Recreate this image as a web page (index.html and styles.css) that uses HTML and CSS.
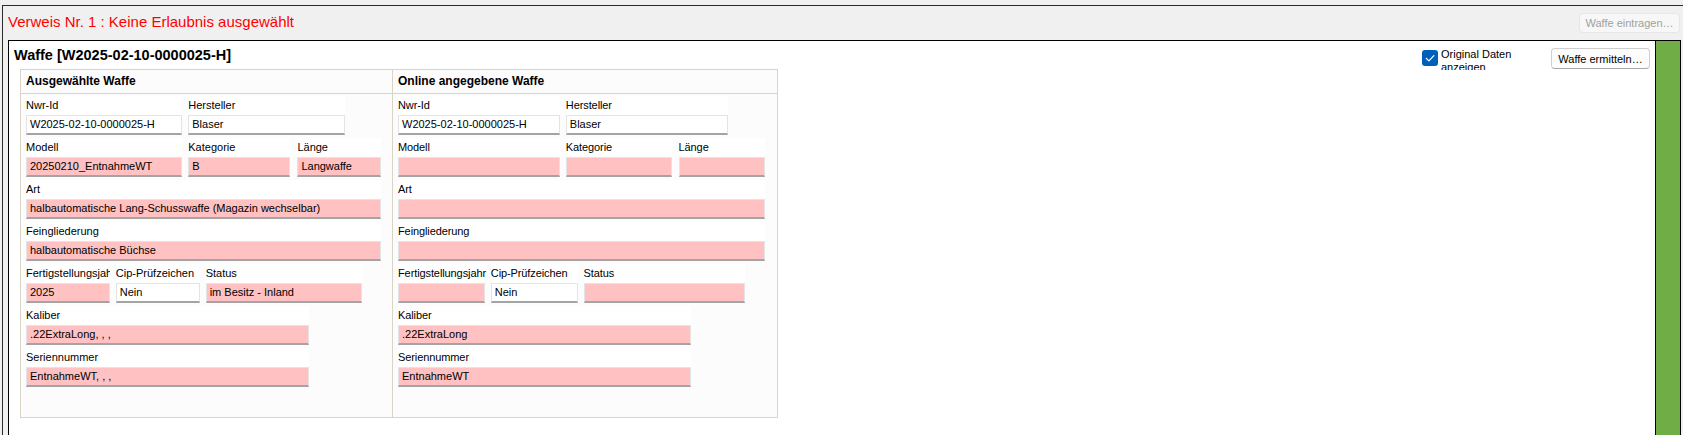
FILE: index.html
```html
<!DOCTYPE html>
<html lang="de">

<head>
    <meta charset="UTF-8">
    <title>Verweis</title>
    <link rel="stylesheet" href="styles.css">
</head>

<body>

    <div class="outer">
        <div class="outer-head">
            <div class="verweis">Verweis Nr. 1 : Keine Erlaubnis ausgewählt</div>
            <button class="btn btn-off" disabled>Waffe eintragen…</button>
        </div>

        <div class="panel">
            <div class="panel-main">
                <div class="panel-head">
                    <div class="panel-title">Waffe [W2025-02-10-0000025-H]</div>
                    <div class="tools">
                        <div class="chk">
                            <span class="chk-box">
                                <svg width="16" height="16" viewBox="0 0 16 16">
                                    <path d="M4.2 8.3 L6.9 10.9 L11.9 5.6" fill="none" stroke="#fff" stroke-width="1.2" stroke-linecap="round" stroke-linejoin="round"/>
                                </svg>
                            </span>
                            <span class="chk-text">Original Daten anzeigen</span>
                        </div>
                        <button class="btn btn-find">Waffe ermitteln…</button>
                    </div>
                </div>

                <div class="cmp">
                    <!-- links: ausgewaehlte waffe -->
                    <div class="col col-left">
                        <div class="col-head">Ausgewählte Waffe</div>
                        <div class="col-body">
                            <div class="row">
                                <div class="fld w43"><div class="lbl">Nwr-Id</div><div class="inp">W2025-02-10-0000025-H</div></div>
                                <div class="fld w43"><div class="lbl">Hersteller</div><div class="inp">Blaser</div></div>
                            </div>
                            <div class="row">
                                <div class="fld w43"><div class="lbl">Modell</div><div class="inp bad">20250210_EntnahmeWT</div></div>
                                <div class="fld w28"><div class="lbl">Kategorie</div><div class="inp bad">B</div></div>
                                <div class="fld w23 gap1"><div class="lbl">Länge</div><div class="inp bad">Langwaffe</div></div>
                            </div>
                            <div class="row">
                                <div class="fld w97"><div class="lbl">Art</div><div class="inp bad">halbautomatische Lang-Schusswaffe (Magazin wechselbar)</div></div>
                            </div>
                            <div class="row">
                                <div class="fld w97"><div class="lbl">Feingliederung</div><div class="inp bad">halbautomatische Büchse</div></div>
                            </div>
                            <div class="row">
                                <div class="fld w23"><div class="lbl">Fertigstellungsjahr</div><div class="inp bad">2025</div></div>
                                <div class="fld w23"><div class="lbl">Cip-Prüfzeichen</div><div class="inp">Nein</div></div>
                                <div class="fld w43"><div class="lbl">Status</div><div class="inp bad">im Besitz - Inland</div></div>
                            </div>
                            <div class="row">
                                <div class="fld w77"><div class="lbl">Kaliber</div><div class="inp bad">.22ExtraLong, , ,</div></div>
                            </div>
                            <div class="row">
                                <div class="fld w77"><div class="lbl">Seriennummer</div><div class="inp bad">EntnahmeWT, , ,</div></div>
                            </div>
                        </div>
                    </div>

                    <!-- rechts: online angegeben -->
                    <div class="col col-right">
                        <div class="col-head">Online angegebene Waffe</div>
                        <div class="col-body">
                            <div class="row">
                                <div class="fld w43"><div class="lbl">Nwr-Id</div><div class="inp">W2025-02-10-0000025-H</div></div>
                                <div class="fld w43"><div class="lbl">Hersteller</div><div class="inp">Blaser</div></div>
                            </div>
                            <div class="row">
                                <div class="fld w43"><div class="lbl">Modell</div><div class="inp bad"></div></div>
                                <div class="fld w28"><div class="lbl">Kategorie</div><div class="inp bad"></div></div>
                                <div class="fld w23 gap1"><div class="lbl">Länge</div><div class="inp bad"></div></div>
                            </div>
                            <div class="row">
                                <div class="fld w97"><div class="lbl">Art</div><div class="inp bad"></div></div>
                            </div>
                            <div class="row">
                                <div class="fld w97"><div class="lbl">Feingliederung</div><div class="inp bad"></div></div>
                            </div>
                            <div class="row">
                                <div class="fld w23"><div class="lbl">Fertigstellungsjahr</div><div class="inp bad"></div></div>
                                <div class="fld w23"><div class="lbl">Cip-Prüfzeichen</div><div class="inp">Nein</div></div>
                                <div class="fld w43"><div class="lbl">Status</div><div class="inp bad"></div></div>
                            </div>
                            <div class="row">
                                <div class="fld w77"><div class="lbl">Kaliber</div><div class="inp bad">.22ExtraLong</div></div>
                            </div>
                            <div class="row">
                                <div class="fld w77"><div class="lbl">Seriennummer</div><div class="inp bad">EntnahmeWT</div></div>
                            </div>
                        </div>
                    </div>
                </div>
            </div>
            <div class="panel-bar"></div>
        </div>
    </div>

</body>

</html>
```

FILE: styles.css
```css
* {
    box-sizing: border-box;
}

body {
    margin: 0;
    height: 435px;
    overflow: hidden;
    background-color: #f0f0f0;
    font-family: "Liberation Sans", Arial, sans-serif;
    font-size: 11px;
    color: #000;
}

.outer {
    margin: 5px 0 0 2px;
    padding: 0 2px 0 5px;
    height: 430px;
    border-left: 1px solid #2b2b2b;
    border-top: 1px solid #2b2b2b;
}

.outer-head {
    display: flex;
    justify-content: space-between;
    align-items: flex-start;
    height: 34px;
}

.verweis {
    margin-top: 7px;
    font-size: 15px;
    line-height: 18px;
    color: #ff0000;
}

.btn {
    font-family: "Liberation Sans", Arial, sans-serif;
    font-size: 11px;
    padding: 0;
    border-radius: 4px;
}

.btn-off {
    margin-top: 7px;
    margin-right: 1px;
    width: 101px;
    height: 20px;
    border: 1px solid #e6e6e6;
    background-color: #f7f7f7;
    color: #a0a0a0;
}

.panel {
    display: flex;
    height: 396px;
    border: 1px solid #000;
    border-bottom: 0;
    background-color: #fff;
}

.panel-main {
    flex: 1;
    padding: 0 5px;
}

.panel-bar {
    width: 25px;
    border-left: 1px solid #000;
    background-color: #70ad47;
}

.panel-head {
    display: flex;
    justify-content: space-between;
    align-items: flex-start;
    height: 28px;
}

.panel-title {
    margin-top: 5px;
    font-size: 14.5px;
    line-height: 18px;
    font-weight: bold;
}

.tools {
    display: flex;
    align-items: flex-start;
    margin-top: 7px;
}

.chk {
    display: flex;
    gap: 3px;
    width: 120px;
    height: 22px;
    overflow: hidden;
}

.chk-box {
    flex: none;
    width: 16px;
    height: 16px;
    margin-top: 2px;
    border-radius: 3px;
    background-color: #005fb8;
}

.chk-box svg {
    display: block;
}

.chk-text {
    width: 88px;
    line-height: 13px;
}

.btn-find {
    margin-left: 9px;
    width: 99px;
    height: 21px;
    border: 1px solid #cfcfcf;
    border-bottom-color: #a8a8a8;
    background-color: #fdfdfd;
    color: #000;
}

/* vergleichstabelle */
.cmp {
    display: flex;
    margin-left: 6px;
    width: 758px;
    height: 349px;
    border: 1px solid #dad4c6;
    background-color: #fcfcfc;
}

.col-left {
    width: 372px;
    border-right: 1px solid #dad4c6;
}

.col-right {
    flex: 1;
}

.col-head {
    height: 24px;
    padding-left: 5px;
    line-height: 23px;
    font-size: 12px;
    font-weight: bold;
    border-bottom: 1px solid #dad4c6;
}

.col-body {
    display: flex;
    flex-direction: column;
    gap: 3px;
    padding: 2px 0 0 5px;
}

.row {
    display: flex;
    gap: 6px;
}

.fld {
    flex: none;
    min-width: 0;
}

.gap1 {
    margin-left: 1px;
}

.w23 { width: 22.9%; }
.w28 { width: 27.9%; }
.w43 { width: 42.7%; }
.w77 { width: 77.2%; }
.w97 { width: 96.9%; }

.lbl {
    height: 19px;
    line-height: 19px;
    background-color: #fff;
    white-space: nowrap;
    overflow: hidden;
}

.col-right .lbl {
    overflow: visible;
    letter-spacing: -0.1px;
}

.inp {
    height: 20px;
    padding: 0 3px;
    line-height: 17px;
    white-space: nowrap;
    overflow: hidden;
    border: 1px solid #e4e4e4;
    border-bottom: 2px solid #a4a4a4;
    background-color: #fff;
}

.inp.bad {
    background-color: #ffc1c1;
}
```
